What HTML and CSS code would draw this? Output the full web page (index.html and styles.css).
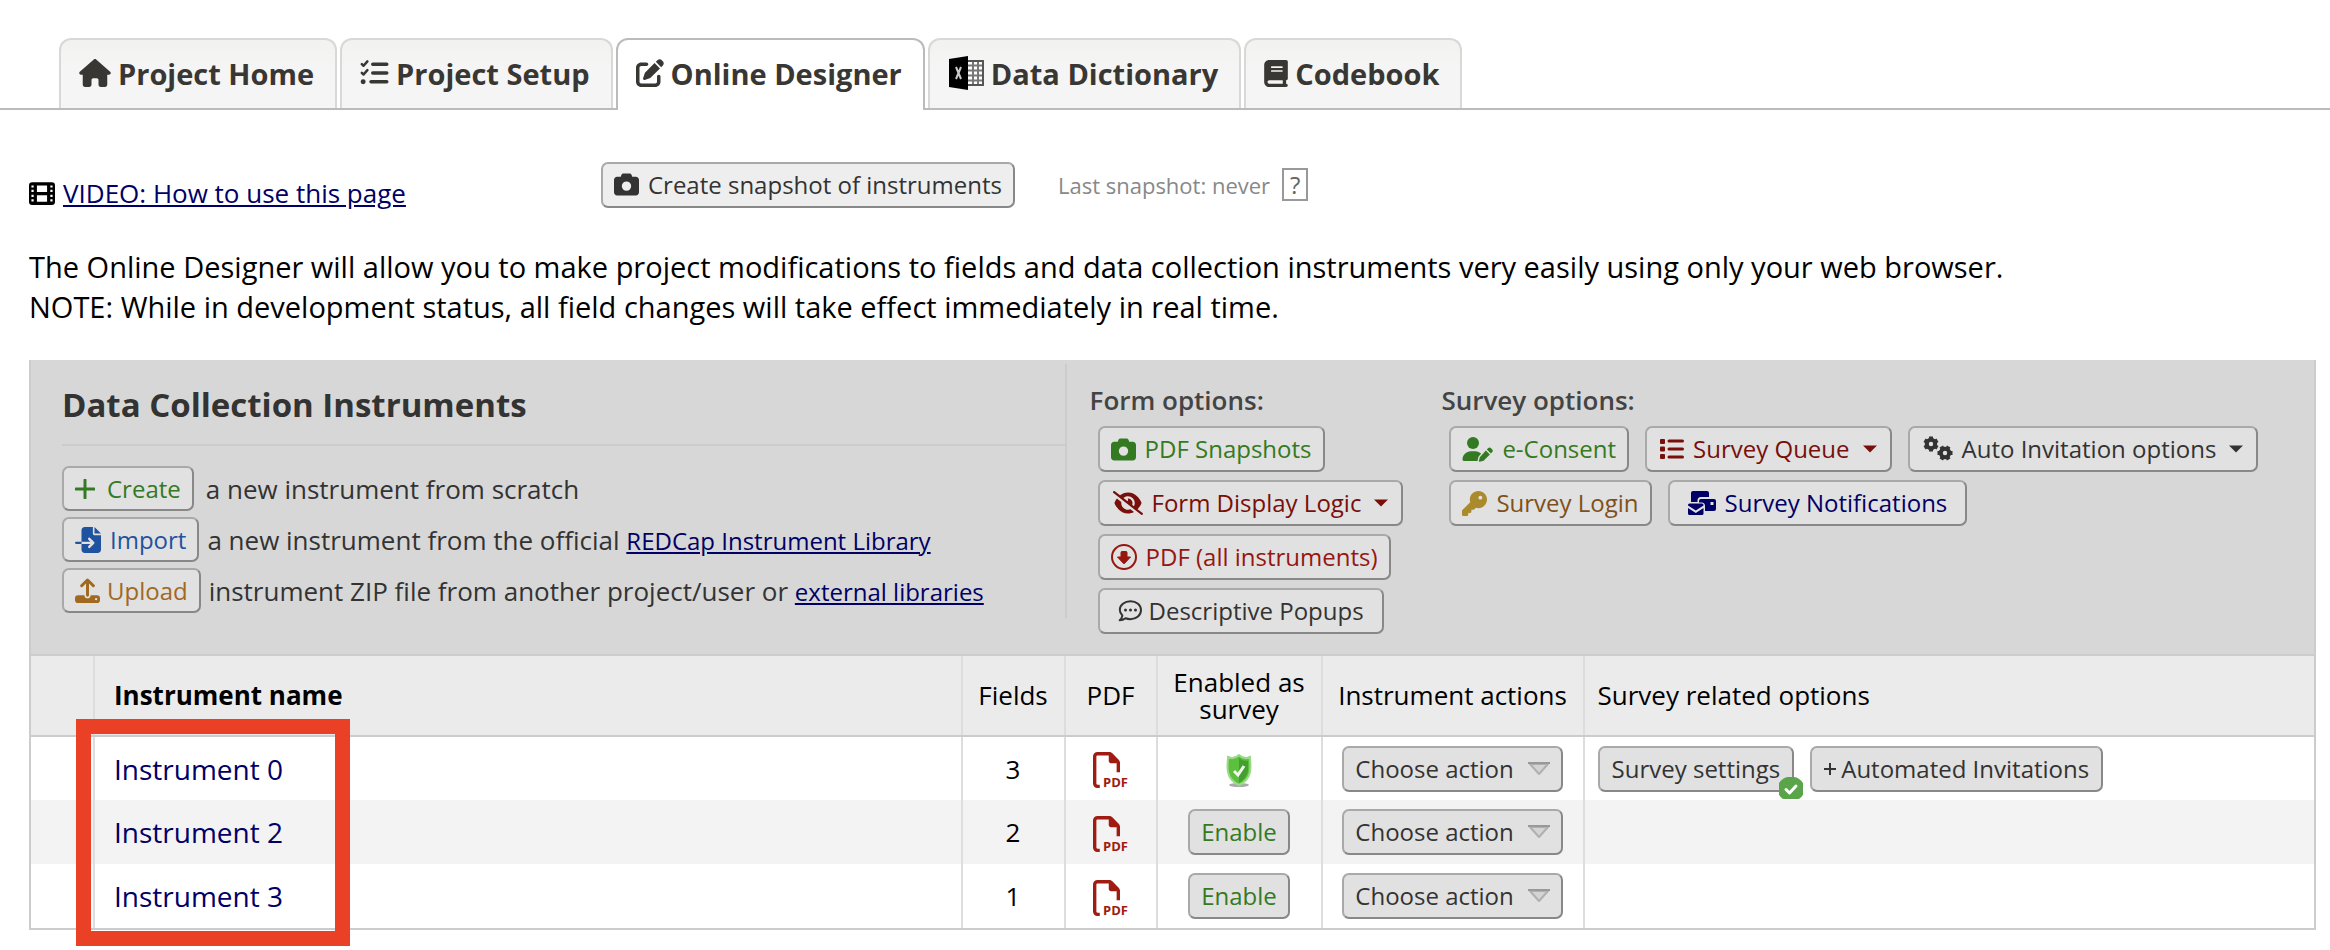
FILE: index.html
```html
<!DOCTYPE html>
<html lang="en">
<head>
<meta charset="utf-8">
<title>Online Designer</title>
<link rel="stylesheet" href="styles.css">
</head>
<body>
<svg class="sprite" aria-hidden="true">
  <symbol id="i-camera" viewBox="0 0 512 512"><path fill-rule="evenodd" d="M149.100 64.800 138.700 96H64C28.700 96 0 124.700 0 160V416c0 35.300 28.700 64 64 64H448c35.300 0 64-28.700 64-64V160c0-35.300-28.700-64-64-64H373.300L362.900 64.800C356.400 45.200 338.100 32 317.400 32H194.600c-20.700 0-39 13.200-45.500 32.800zM256 192a96 96 0 1 1 0 192 96 96 0 1 1 0-192z"/></symbol>
  <symbol id="i-file" viewBox="0 0 512 512"><path d="M64 464H96v48H64c-35.300 0-64-28.700-64-64V64C0 28.700 28.700 0 64 0H229.500c17 0 33.300 6.700 45.300 18.700l90.500 90.500c12 12 18.700 28.300 18.700 45.300V288H336V160H256c-17.700 0-32-14.300-32-32V48H64c-8.800 0-16 7.200-16 16V448c0 8.800 7.200 16 16 16z"/></symbol>
  <symbol id="i-triangle" viewBox="0 0 22 14"><path d="M2 2H20L11 12Z" fill="#d4d4d4" stroke="#b0b0b0" stroke-width="2" stroke-linejoin="round"/><path d="M0 1H22" stroke="#999" stroke-width="2"/></symbol>
  <symbol id="i-caret" viewBox="0 0 14 8"><path d="M0 0.500H14L7 7.500Z"/></symbol>
</svg>

<nav class="tabs">
  <a class="tab" href="#home"><svg class="ic ic-home" viewBox="0 0 576 512"><path d="M575.800 255.500c0 18-15 32.100-32 32.100h-32l.7 160.200c0 2.700-.2 5.400-.5 8.100V472c0 22.100-17.900 40-40 40H392c-22.100 0-40-17.900-40-40V384c0-17.700-14.300-32-32-32H256c-17.700 0-32 14.300-32 32v88c0 22.100-17.900 40-40 40H104c-22.100 0-40-17.900-40-40V287.600H32c-18 0-32-14-32-32.100c0-9 3-17 10-24L266.400 8c7-7 15-8 22-8s15 2 21 7L564.800 231.500c8 7 12 15 11 24z"/></svg>Project Home</a>
  <a class="tab" href="#setup"><svg class="ic ic-list" viewBox="0 0 512 512" stroke="currentColor" stroke-linecap="round" stroke-linejoin="round"><path fill="none" stroke-width="46" d="M24 92 56 124 126 44M24 252 56 284 126 204"/><path stroke-width="64" d="M224 96H480M224 256H480M192 416H480"/><path stroke-width="90" d="M48 416h1"/></svg>Project Setup</a>
  <a class="tab active" href="#designer" aria-current="page"><svg class="ic ic-edit" viewBox="0 0 512 512"><path d="M471.600 21.700c-21.900-21.900-57.300-21.900-79.200 0L362.300 51.700l97.900 97.900 30.100-30.100c21.900-21.900 21.900-57.300 0-79.200L471.600 21.700zm-299.200 220c-6.100 6.100-10.800 13.600-13.500 21.900l-29.600 88.800c-2.900 8.600-.6 18.100 5.800 24.600s15.900 8.700 24.600 5.800l88.800-29.600c8.200-2.700 15.700-7.400 21.900-13.500L437.700 172.300 339.700 74.300 172.400 241.700zM96 64C43 64 0 107 0 160V416c0 53 43 96 96 96H352c53 0 96-43 96-96V320c0-17.700-14.300-32-32-32s-32 14.300-32 32v96c0 17.700-14.300 32-32 32H96c-17.700 0-32-14.300-32-32V160c0-17.700 14.300-32 32-32h96c17.700 0 32-14.300 32-32s-14.300-32-32-32H96z"/></svg>Online Designer</a>
  <a class="tab" href="#dictionary"><svg class="ic ic-excel" viewBox="0 0 36 36"><rect x="18" y="6" width="17" height="24" fill="#fff" stroke="#555" stroke-width="2"/><path d="M20 10.500H34M20 15.500H34M20 20.500H34M20 25.500H34M25 7V29M30 7V29" stroke="#777" stroke-width="2" fill="none"/><path d="M1 4 20 1V35L1 32Z" fill="#000"/><path d="M8 12 13 24M13 12 8 24" stroke="#ccc" stroke-width="2"/></svg>Data Dictionary</a>
  <a class="tab" href="#codebook"><svg class="ic ic-book" viewBox="0 0 448 512"><path fill-rule="evenodd" d="M96 0C43 0 0 43 0 96V416c0 53 43 96 96 96H416c17.700 0 32-14.300 32-32s-14.300-32-32-32V384c17.700 0 32-14.300 32-32V32c0-17.700-14.300-32-32-32H96zm0 384H352v64H96c-17.700 0-32-14.300-32-32s14.300-32 32-32zm48-264H336a14 14 0 0 1 0 32H144a14 14 0 0 1 0-32zm0 72H336a14 14 0 0 1 0 32H144a14 14 0 0 1 0-32z"/></svg>Codebook</a>
</nav>

<main class="page">
  <div class="tools">
    <a class="video" href="#video"><svg class="ic ic-film" viewBox="0 0 512 448"><path fill-rule="evenodd" d="M64 0H448a64 64 0 0 1 64 64V384a64 64 0 0 1-64 64H64a64 64 0 0 1-64-64V64A64 64 0 0 1 64 0zM48 64v44h44V64zM48 148v44h44v-44zM48 250v44h44v-44zM48 336v44h44v-44zM420 64v44h44V64zM420 148v44h44v-44zM420 250v44h44v-44zM420 336v44h44v-44zM156 64V192H356V64zM156 256V384H356V256z"/></svg><span>VIDEO: How to use this page</span></a>
    <button class="btn snapshot" type="button"><svg class="ic ic-cam"><use href="#i-camera"/></svg>Create snapshot of instruments</button>
    <span class="last">Last snapshot: never</span>
    <button class="help" type="button" aria-label="Help">?</button>
  </div>

  <p class="intro">The Online Designer will allow you to make project modifications to fields and data collection instruments very easily using only your web browser.<br>NOTE: While in development status, all field changes will take effect immediately in real time.</p>

  <section class="panel">
    <div class="head">
      <div class="left">
        <h1>Data Collection Instruments</h1>
        <div class="adders">
          <div class="adder create"><button class="btn green" type="button"><svg class="ic ic-plus" viewBox="0 0 20 20"><path d="M10 1V19M1 10H19" stroke="currentColor" stroke-width="3" stroke-linecap="round"/></svg>Create</button><span>a new instrument from scratch</span></div>
          <div class="adder"><button class="btn blue" type="button"><svg class="ic ic-import" viewBox="0 0 512 512"><path d="M128 64C128 28.700 156.700 0 192 0H352V128c0 17.700 14.300 32 32 32H512V448c0 35.300-28.700 64-64 64H192c-35.300 0-64-28.700-64-64V336H302l-39 39c-22 22 12 56 34 34l80-80c9-9 9-25 0-34l-80-80c-22-22-56 12-34 34l39 39H128zM0 312c0-13 11-24 24-24H128v48H24c-13 0-24-11-24-24zM512 128H384V0z"/></svg>Import</button><span>a new instrument from the official <a href="#library">REDCap Instrument Library</a></span></div>
          <div class="adder upload"><button class="btn orange" type="button"><svg class="ic ic-upload" viewBox="0 0 512 512"><path fill-rule="evenodd" d="M64 352H192a64 64 0 0 0 128 0H448a64 64 0 0 1 64 64v32a64 64 0 0 1-64 64H64a64 64 0 0 1-64-64V416a64 64 0 0 1 64-64zM432 408a24 24 0 1 0 0 48 24 24 0 1 0 0-48z"/><path d="M256 352V50M136 160 256 40 376 160" fill="none" stroke="currentColor" stroke-width="60" stroke-linecap="round" stroke-linejoin="round"/></svg>Upload</button><span>instrument ZIP file from another project/user or <a href="#external">external libraries</a></span></div>
        </div>
      </div>
      <div class="group forms">
        <h2>Form options:</h2>
        <div class="stack">
          <button class="btn green" type="button"><svg class="ic ic-cam"><use href="#i-camera"/></svg>PDF Snapshots</button>
          <button class="btn maroon inset" type="button"><svg class="ic ic-eye" viewBox="0 0 640 512"><path d="M38.800 5.100C28.400-3.100 13.300-1.200 5.100 9.200S-1.200 34.700 9.200 42.900l592 464c10.400 8.200 25.500 6.300 33.700-4.100s6.300-25.500-4.100-33.700L525.600 386.700c39.600-40.600 66.400-86.100 79.900-118.400c3.300-7.900 3.300-16.700 0-24.600c-14.900-35.700-46.200-87.700-93-131.100C465.500 68.800 400.800 32 320 32c-68.200 0-125 26.300-169.300 60.800L38.800 5.100zM223.100 149.500C248.600 126.200 282.700 112 320 112c79.500 0 144 64.500 144 144c0 24.900-6.300 48.300-17.400 68.700L408 294.500c8.400-19.300 10.600-41.400 4.800-63.300c-11.100-41.500-47.800-69.400-88.600-71.100c-5.800-.2-9.200 6.100-7.400 11.700c2.100 6.400 3.300 13.200 3.300 20.300c0 10.200-2.400 19.800-6.600 28.300l-90.300-70.800zM373 389.900c-16.400 6.500-34.300 10.100-53 10.100c-79.500 0-144-64.500-144-144c0-6.900 .5-13.600 1.400-20.200L83.100 161.500C60.300 191.200 44 220.800 34.500 243.700c-3.300 7.900-3.300 16.700 0 24.600c14.900 35.700 46.200 87.700 93 131.100C174.500 443.200 239.200 480 320 480c47.800 0 89.900-12.900 126.200-32.500L373 389.900z"/></svg>Form Display Logic<svg class="ic ic-caret"><use href="#i-caret"/></svg></button>
          <button class="btn red" type="button"><svg class="ic ic-down" viewBox="0 0 26 26"><circle cx="13" cy="13" r="12" fill="none" stroke="currentColor" stroke-width="2"/><path d="M11 7.500h4a1 1 0 0 1 1 1V13h3.500L13.500 19.500h-1L6.500 13H10V8.500a1 1 0 0 1 1-1z" stroke="currentColor" stroke-width="1" stroke-linejoin="round"/></svg>PDF (all instruments)</button>
          <button class="btn popups" type="button"><svg class="ic ic-comment" viewBox="0 0 24 22"><path d="M12.500 1.200C6.500 1.200 1.800 5 1.800 9.800c0 2.200 1 4.300 2.600 5.800-.3 1.800-1.300 3.400-2.700 4.700 2.300 0 4.300-.8 5.800-2 1.500.6 3.200.9 5 .9 6 0 10.500-4.200 10.500-9.200S18.500 1.200 12.500 1.200z" fill="none" stroke="currentColor" stroke-width="2" stroke-linejoin="round"/><circle cx="7.500" cy="10" r="1.500"/><circle cx="12.500" cy="10" r="1.500"/><circle cx="17.500" cy="10" r="1.500"/></svg>Descriptive Popups</button>
        </div>
      </div>
      <div class="group surveys">
        <h2>Survey options:</h2>
        <div class="stack">
          <div class="row">
            <button class="btn green" type="button"><svg class="ic ic-pen" viewBox="0 0 640 512"><circle cx="224" cy="128" r="128"/><path d="M178 304h92c50 0 95 20 127 54l-40 40c-8 8-14 18-17 29l-15 60c-2 8-2 17 0 25H30c-17 0-30-13-30-30C0 384 80 304 178 304zM549 235c16-15 41-15 56 0l29 30c16 15 16 41 0 56l-29 30-86-86zM498 287l86 86-134 134-82 20c-12 3-21-6-18-18l20-76z"/></svg>e-Consent</button>
            <button class="btn maroon inset" type="button"><svg class="ic ic-queue" viewBox="0 0 24 22"><path d="M9 3H22.500M9 11H22.500M9 19H22.500" stroke="currentColor" stroke-width="3" stroke-linecap="round"/><rect x="0" y="1" width="5" height="5" rx="1"/><rect x="0" y="8.500" width="5" height="5" rx="1"/><rect x="0" y="16" width="5" height="5" rx="1"/></svg>Survey Queue<svg class="ic ic-caret"><use href="#i-caret"/></svg></button>
            <button class="btn inset" type="button"><svg class="ic ic-gears" viewBox="0 0 30 26"><g fill="none" stroke="currentColor" stroke-width="4"><circle cx="8" cy="8" r="4.200"/><path d="M8 .5V4M8 12V15.500M1.500 4.300 4.500 6M11.500 10 14.500 11.700M14.500 4.300 11.500 6M4.500 10 1.500 11.700"/><circle cx="22" cy="17" r="4.200"/><path d="M14.500 17H18M26 17H29.500M18.300 10.500 20 13.500M24 20.500 25.700 23.500M25.700 10.500 24 13.500M20 20.500 18.300 23.500"/></g></svg>Auto Invitation options<svg class="ic ic-caret"><use href="#i-caret"/></svg></button>
          </div>
          <div class="row">
            <button class="btn brown" type="button"><svg class="ic ic-key" viewBox="0 0 512 512"><path fill-rule="evenodd" d="M336 352c97.200 0 176-78.800 176-176S433.200 0 336 0S160 78.800 160 176c0 18.700 2.900 36.800 8.300 53.700L7 391c-4.500 4.500-7 10.600-7 17v80c0 13.300 10.700 24 24 24h80c13.300 0 24-10.700 24-24V448h40c13.300 0 24-10.700 24-24V384h40c6.400 0 12.500-2.500 17-7l33.300-33.300c16.900 5.400 35 8.300 53.700 8.300zM376 96a40 40 0 1 1 0 80 40 40 0 1 1 0-80z"/></svg>Survey Login</button>
            <button class="btn navy notify" type="button"><svg class="ic ic-mail" viewBox="0 0 28 24"><path d="M5 0H19a2 2 0 0 1 2 2V6H13a3.500 3.500 0 0 0-3.500 3.500V11H3V2a2 2 0 0 1 2-2z"/><path fill-rule="evenodd" d="M13 8H26a2 2 0 0 1 2 2V18a2 2 0 0 1-2 2H17V15a3.500 3.500 0 0 0-3.500-3.500H11V10a2 2 0 0 1 2-2zM22.500 11v3h3v-3z"/><path d="M0 14.500V14a1.500 1.500 0 0 1 1.500-1.500H14A1.500 1.500 0 0 1 15.500 14v.5L7.800 19.500zM0 17 7.800 22 15.500 17V22.500A1.500 1.500 0 0 1 14 24H1.500A1.500 1.500 0 0 1 0 22.500z"/></svg>Survey Notifications</button>
          </div>
        </div>
      </div>
    </div>

    <table class="grid">
      <colgroup><col class="c-drag"><col class="c-name"><col class="c-fields"><col class="c-pdf"><col class="c-enabled"><col class="c-actions"><col></colgroup>
      <thead>
        <tr><th></th><th class="name strong">Instrument name</th><th>Fields</th><th>PDF</th><th>Enabled as survey</th><th>Instrument actions</th><th class="related">Survey related options</th></tr>
      </thead>
      <tbody>
        <tr><td></td><td class="name"><a href="#i0">Instrument 0</a></td><td>3</td><td><a class="pdf" href="#pdf0" aria-label="PDF of Instrument 0"><svg class="ic ic-pdf" viewBox="0 0 36 36"><use href="#i-file" width="36" height="36"/><text class="pdf-mark" x="10" y="35">PDF</text></svg></a></td>
          <td><svg class="ic ic-shield" viewBox="0 0 26 34"><ellipse cx="13" cy="31" rx="10" ry="2" fill="#aaa"/><path d="M13 1C10 4 6 5 2 3C2 8 .8 11 2 18C3 24 8 29 13 31C18 29 23 24 24 18C25.200 11 24 8 24 3C20 5 16 4 13 1Z" fill="#5cbf3e" stroke="#9adb88" stroke-width="2"/><path d="M13 4V29C18 26 21 22 22 17L22 7C18 7 15 6 13 4Z" fill="#44a02c"/><path d="M8 17 12 21 18 12" fill="none" stroke="#f2f7f0" stroke-width="3"/></svg></td>
          <td><button class="btn action" type="button">Choose action<svg class="ic ic-tri"><use href="#i-triangle"/></svg></button></td>
          <td class="related"><div class="row options"><button class="btn settings" type="button">Survey settings<svg class="ic ic-badge" viewBox="0 0 24 22"><path d="M12 0A12 12 0 0 1 20 22H4A12 12 0 0 1 12 0Z" fill="#5aa549"/><path d="M7 12.500 10.500 16 17 9" fill="none" stroke="#fff" stroke-width="3" stroke-linecap="round" stroke-linejoin="round"/></svg></button><button class="btn auto" type="button"><svg class="ic ic-plus-sm" viewBox="0 0 12 12"><path d="M6 0V12M0 6H12" stroke="currentColor" stroke-width="2"/></svg>Automated Invitations</button></div></td></tr>
        <tr><td></td><td class="name"><a href="#i2">Instrument 2</a></td><td>2</td><td><a class="pdf" href="#pdf2" aria-label="PDF of Instrument 2"><svg class="ic ic-pdf" viewBox="0 0 36 36"><use href="#i-file" width="36" height="36"/><text class="pdf-mark" x="10" y="35">PDF</text></svg></a></td>
          <td><button class="btn enable" type="button">Enable</button></td>
          <td><button class="btn action" type="button">Choose action<svg class="ic ic-tri"><use href="#i-triangle"/></svg></button></td><td></td></tr>
        <tr><td></td><td class="name"><a href="#i3">Instrument 3</a></td><td>1</td><td><a class="pdf" href="#pdf3" aria-label="PDF of Instrument 3"><svg class="ic ic-pdf" viewBox="0 0 36 36"><use href="#i-file" width="36" height="36"/><text class="pdf-mark" x="10" y="35">PDF</text></svg></a></td>
          <td><button class="btn enable" type="button">Enable</button></td>
          <td><button class="btn action" type="button">Choose action<svg class="ic ic-tri"><use href="#i-triangle"/></svg></button></td><td></td></tr>
      </tbody>
    </table>
    <div class="highlight"></div>
  </section>
</main>
</body>
</html>
```
FILE: styles.css
```css
* { box-sizing: border-box; }
body { margin: 0; padding-top: 38px; background: #fff; color: #000; font-family: "Open Sans", sans-serif; font-size: 26px; }
.sprite { position: absolute; width: 0; height: 0; }
.ic { flex: none; fill: currentColor; }
a { color: #000066; }

.tabs { display: flex; gap: 3px; padding-left: 59px; border-bottom: 2px solid #bbb; }
.tab { display: flex; align-items: center; gap: 7px; height: 70px; padding: 0 21px 2px 18px; border: 2px solid #d8d8d6; border-bottom: 0; border-radius: 12px 12px 0 0; background: linear-gradient(#f2f2f0, #f5f5f5 40%); color: #393733; font-size: 29px; font-weight: 700; text-decoration: none; white-space: nowrap; }
.tab.active { height: 72px; margin-bottom: -2px; padding-bottom: 4px; border-color: #bbb; background: #fff; }
.ic-home { width: 32px; height: 28px; }
.ic-list { width: 29px; height: 28px; }
.ic-edit { width: 28px; height: 28px; }
.ic-excel { width: 36px; height: 36px; }
.ic-book { width: 24px; height: 27px; }

.page { padding: 48px 14px 20px 29px; }
.tools { display: flex; align-items: center; }
.video { display: flex; align-items: center; gap: 8px; padding-top: 17px; color: #000066; text-decoration: none; }
.video span { text-decoration: underline; }
.ic-film { width: 26px; height: 23px; color: #000; }
.last { margin-left: 43px; color: #888; font-size: 22px; }
.help { margin-left: 12px; width: 26px; height: 33px; padding: 0; border: 2px solid #999; background: #fff; color: #666; font: 24px/28px "Open Sans", sans-serif; }
.intro { margin: 36px 0 33px; font-size: 29px; line-height: 40px; }

.btn { display: inline-flex; align-items: center; gap: 9px; height: 46px; padding: 0 11px; border: 2px solid; border-color: #a9a9a9 #888 #888 #a9a9a9; border-radius: 7px; background: #e1e1e1; color: #333; font: 24px/32px "Open Sans", sans-serif; white-space: nowrap; }
.snapshot { margin-left: 195px; background: #eee; }
.green { color: #347a22; }
.blue { color: #1f53a0; }
.orange { color: #a1681f; }
.maroon { color: #780f0a; }
.red { color: #961710; }
.brown { color: #80501a; }
.navy { color: #000066; }
.ic-cam { width: 25px; height: 25px; }

.panel { position: relative; border: 2px solid #ccc; border-top: 0; }
.head { display: grid; grid-template-columns: 1036fr 352fr 896fr; height: 296px; padding-top: 4px; border-bottom: 2px solid #ccc; background: #d7d7d7; color: #333; }
.left { height: 254px; border-right: 2px solid #ccc; padding-left: 31px; }
h1 { margin: 0; padding: 20px 0 19px; border-bottom: 2px solid #ccc; font-size: 33px; line-height: 41px; }
.adders { display: flex; flex-direction: column; gap: 6px; padding-top: 20px; }
.adder { display: flex; align-items: center; gap: 8px; white-space: nowrap; }
.adder .btn { height: 45px; }
.adder a { font-size: 24px; }
.create, .create .btn { gap: 12px; }
.upload .btn { gap: 7px; }
.ic-plus { width: 20px; height: 20px; }
.ic-import { width: 26px; height: 26px; }
.ic-upload { width: 25px; height: 25px; }
.group { padding: 18px 0 0 23px; }
h2 { margin: 0 0 8px; color: #444; font-size: 26px; line-height: 36px; font-weight: 600; }
.stack { display: flex; flex-direction: column; align-items: flex-start; gap: 8px; padding-left: 8px; }
.row { display: flex; gap: 16px; }
.inset { padding: 0 13px; }
.popups { gap: 7px; padding: 0 18px; }
.notify { padding: 0 18px; }
.ic-eye { width: 30px; height: 24px; }
.ic-down { width: 26px; height: 26px; }
.ic-comment { width: 24px; height: 22px; }
.ic-pen { width: 31px; height: 24px; overflow: visible; }
.ic-queue { width: 24px; height: 22px; }
.ic-gears { width: 30px; height: 26px; }
.ic-key { width: 25px; height: 25px; color: #a98a2c; }
.ic-mail { width: 28px; height: 24px; }
.ic-caret { width: 14px; height: 8px; margin-left: 4px; }

.grid { width: 100%; border-collapse: collapse; table-layout: fixed; }
.c-drag { width: 63px; }
.c-name { width: 38%; }
.c-fields { width: 103px; }
.c-pdf { width: 92px; }
.c-enabled { width: 165px; }
.c-actions { width: 262px; }
.grid th, .grid td { padding: 0; border-right: 2px solid #ddd; text-align: center; vertical-align: middle; }
.grid th:last-child, .grid td:last-child { border-right: 0; }
.grid th { height: 80px; background: #ebebeb; border-bottom: 2px solid #ccc; font-weight: 400; line-height: 27px; }
.grid .strong { font-weight: 700; }
.grid td { height: 64px; }
.grid tbody tr:nth-child(even) { background: #f3f3f3; }
.grid .name { padding-left: 19px; text-align: left; }
.name a { font-size: 28px; text-decoration: none; }
.grid .related { padding-left: 13px; text-align: left; }
.grid .btn, .ic-shield, .pdf { vertical-align: middle; }
.pdf { display: inline-block; height: 36px; color: #a01c12; text-decoration: none; }
.ic-pdf { display: block; width: 36px; height: 36px; overflow: visible; }
.pdf-mark { font: 700 13px "Open Sans", sans-serif; }
.ic-shield { width: 26px; height: 34px; }
.enable { color: #347a22; }
.grid .action { gap: 14px; }
.ic-tri { width: 22px; height: 14px; }
.settings { position: relative; }
.options .btn { padding: 0 12px; }
.grid .auto { gap: 5px; }
.ic-badge { position: absolute; right: -11px; bottom: -9px; width: 24px; height: 22px; }
.ic-plus-sm { width: 12px; height: 12px; }

.highlight { position: absolute; left: 45px; bottom: -18px; width: 274px; height: 227px; border: 15px solid #ea4025; pointer-events: none; }
```
